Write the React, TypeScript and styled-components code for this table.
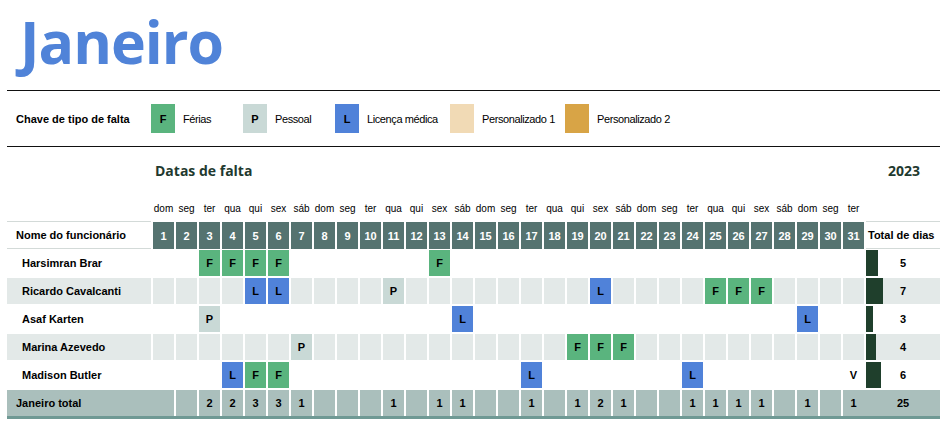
import React from 'react';
import styled, { createGlobalStyle } from 'styled-components';

type Code = 'F' | 'P' | 'L' | 'V';

const CODE_COLORS: Record<Code, string> = {
  F: '#5AB47E',
  P: '#C9D9D6',
  L: '#5082D9',
  V: 'transparent',
};

const WEEKDAYS = ['dom', 'seg', 'ter', 'qua', 'qui', 'sex', 'sáb'];
const DAYS = Array.from({ length: 31 }, (_, i) => i + 1);
const COLUMNS = '144px repeat(31, 21px) 74px';

const legend = [
  { code: 'F', label: 'Férias', color: CODE_COLORS.F, width: 92 },
  { code: 'P', label: 'Pessoal', color: CODE_COLORS.P, width: 92 },
  { code: 'L', label: 'Licença médica', color: CODE_COLORS.L, width: 115 },
  { code: '', label: 'Personalizado 1', color: '#F1DAB5', width: 115 },
  { code: '', label: 'Personalizado 2', color: '#D8A446', width: 115 },
];

const employees: { name: string; absences: Partial<Record<number, Code>> }[] = [
  { name: 'Harsimran Brar', absences: { 3: 'F', 4: 'F', 5: 'F', 6: 'F', 13: 'F' } },
  {
    name: 'Ricardo Cavalcanti',
    absences: { 5: 'L', 6: 'L', 11: 'P', 20: 'L', 25: 'F', 26: 'F', 27: 'F' },
  },
  { name: 'Asaf Karten', absences: { 3: 'P', 14: 'L', 29: 'L' } },
  { name: 'Marina Azevedo', absences: { 7: 'P', 19: 'F', 20: 'F', 21: 'F' } },
  {
    name: 'Madison Butler',
    absences: { 4: 'L', 5: 'F', 6: 'F', 17: 'L', 24: 'L', 31: 'V' },
  },
];

const GlobalStyle = createGlobalStyle`
  body {
    margin: 0;
    background: #fff;
    font-family: "Liberation Sans", Arial, sans-serif;
    color: #000;
  }
`;

const App: React.FC = () => {
  const dayTotals = DAYS.map(
    (d) => employees.filter((e) => e.absences[d]).length
  );
  const grandTotal = dayTotals.reduce((a, b) => a + b, 0);

  return (
    <Page>
      <GlobalStyle />
      <TitleBar>
        <Title>Janeiro</Title>
      </TitleBar>

      <Legend>
        <LegendLabel>Chave de tipo de falta</LegendLabel>
        {legend.map((item) => (
          <LegendItem key={item.label} $width={item.width}>
            <Swatch $color={item.color}>{item.code}</Swatch>
            <LegendText>{item.label}</LegendText>
          </LegendItem>
        ))}
      </Legend>

      <DatesHeading>
        <SectionTitle>Datas de falta</SectionTitle>
        <SectionTitle>2023</SectionTitle>
      </DatesHeading>

      <WeekdayRow>
        <span />
        {DAYS.map((d) => (
          <Weekday key={d}>{WEEKDAYS[(d - 1) % 7]}</Weekday>
        ))}
      </WeekdayRow>

      <Table>
        <HeaderRow>
          <HeaderLabel $indent={9}>Nome do funcionário</HeaderLabel>
          {DAYS.map((d) => (
            <DayNumber key={d}>{d}</DayNumber>
          ))}
          <HeaderLabel $indent={2}>Total de dias</HeaderLabel>
        </HeaderRow>

        {employees.map((emp, i) => {
          const shaded = i % 2 === 1;
          const count = Object.keys(emp.absences).length;
          return (
            <BodyRow key={emp.name}>
              <NameCell $shaded={shaded}>{emp.name}</NameCell>
              {DAYS.map((d) => {
                const code = emp.absences[d];
                return (
                  <DayCell
                    key={d}
                    $bg={code ? CODE_COLORS[code] : shaded ? '#E3E9E8' : '#fff'}
                  >
                    {code}
                  </DayCell>
                );
              })}
              <TotalCell $shaded={shaded}>
                <Bar style={{ width: Math.round(count * 2.45) }} />
                <TotalNumber>{count}</TotalNumber>
              </TotalCell>
            </BodyRow>
          );
        })}

        <SumRow>
          <SumLabel>Janeiro total</SumLabel>
          {dayTotals.map((t, i) => (
            <SumCell key={i}>{t > 0 ? t : ''}</SumCell>
          ))}
          <SumTotal>{grandTotal}</SumTotal>
        </SumRow>
      </Table>
    </Page>
  );
};

export default App;

const Page = styled.div`
  width: 933px;
  padding: 0 6px 0 7px;
`;

const TitleBar = styled.div`
  height: 90px;
  padding-left: 13px;
  box-sizing: border-box;
`;

const Title = styled.h1`
  margin: 0;
  padding-top: 12px;
  font-family: 'Open Sans', sans-serif;
  font-weight: 700;
  font-size: 59px;
  line-height: 59px;
  color: #5083d8;
  letter-spacing: -1px;
`;

const Legend = styled.div`
  display: flex;
  align-items: center;
  height: 55px;
  padding-left: 9px;
  border-top: 1px solid #111;
  border-bottom: 1px solid #111;
`;

const LegendLabel = styled.div`
  width: 135px;
  font-size: 11px;
  font-weight: 700;
`;

const LegendItem = styled.div<{ $width: number }>`
  display: flex;
  align-items: center;
  gap: 8px;
  width: ${(p) => p.$width}px;
`;

const Swatch = styled.div<{ $color: string }>`
  width: 24px;
  height: 29px;
  display: flex;
  align-items: center;
  justify-content: center;
  background: ${(p) => p.$color};
  font-size: 11px;
  font-weight: 700;
`;

const LegendText = styled.span`
  font-size: 11px;
  letter-spacing: -0.4px;
  white-space: nowrap;
`;

const DatesHeading = styled.div`
  display: flex;
  align-items: center;
  justify-content: space-between;
  height: 46px;
  padding: 0 20px 0 148px;
`;

const SectionTitle = styled.h2`
  margin: 0;
  font-family: 'Open Sans', sans-serif;
  font-size: 14px;
  font-weight: 700;
  color: #1f3a2f;
`;

const WeekdayRow = styled.div`
  display: grid;
  grid-template-columns: ${COLUMNS};
  column-gap: 2px;
  height: 28px;
  padding-top: 2px;
  box-sizing: border-box;
  align-items: center;
`;

const Weekday = styled.span`
  font-size: 10px;
  text-align: center;
  white-space: nowrap;
`;

const Table = styled.div`
  display: flex;
  flex-direction: column;
  gap: 2px;
`;

const HeaderRow = styled.div`
  display: grid;
  grid-template-columns: ${COLUMNS};
  column-gap: 2px;
  height: 28px;
  margin-bottom: -1px;
`;

const HeaderLabel = styled.div<{ $indent: number }>`
  display: flex;
  align-items: center;
  padding-left: ${(p) => p.$indent}px;
  border-top: 1px solid #d3dad8;
  border-bottom: 1px solid #d3dad8;
  font-size: 11px;
  font-weight: 700;
  white-space: nowrap;
`;

const DayNumber = styled.div`
  display: flex;
  align-items: center;
  justify-content: center;
  margin-top: 1px;
  background: #557370;
  color: #fff;
  font-size: 11px;
  font-weight: 700;
`;

const BodyRow = styled.div`
  display: grid;
  grid-template-columns: ${COLUMNS};
  column-gap: 2px;
  height: 26px;
`;

const NameCell = styled.div<{ $shaded: boolean }>`
  display: flex;
  align-items: center;
  padding-left: 15px;
  background: ${(p) => (p.$shaded ? '#E3E9E8' : '#fff')};
  font-size: 11px;
  font-weight: 700;
  white-space: nowrap;
`;

const DayCell = styled.div<{ $bg: string }>`
  display: flex;
  align-items: center;
  justify-content: center;
  background: ${(p) => p.$bg};
  font-size: 11px;
  font-weight: 700;
`;

const TotalCell = styled.div<{ $shaded: boolean }>`
  display: grid;
  grid-template-areas: 'stack';
  align-items: center;
  background: ${(p) => (p.$shaded ? '#E3E9E8' : '#fff')};
`;

const Bar = styled.div`
  grid-area: stack;
  justify-self: start;
  height: 100%;
  background: #1f3f2c;
`;

const TotalNumber = styled.span`
  grid-area: stack;
  justify-self: center;
  font-size: 11px;
  font-weight: 700;
`;

const SumRow = styled.div`
  display: grid;
  grid-template-columns: ${COLUMNS};
  column-gap: 2px;
  height: 26px;
  border-bottom: 3px solid #6f9994;
  background: #fff;
`;

const SumBase = styled.div`
  display: flex;
  align-items: center;
  background: #aabfbc;
  font-size: 11px;
  font-weight: 700;
`;

const SumLabel = styled(SumBase)`
  padding-left: 9px;
  box-shadow: 2px 0 0 #aabfbc;
`;

const SumCell = styled(SumBase)`
  justify-content: center;
`;

const SumTotal = styled(SumBase)`
  justify-content: center;
  box-shadow: -2px 0 0 #aabfbc;
`;
